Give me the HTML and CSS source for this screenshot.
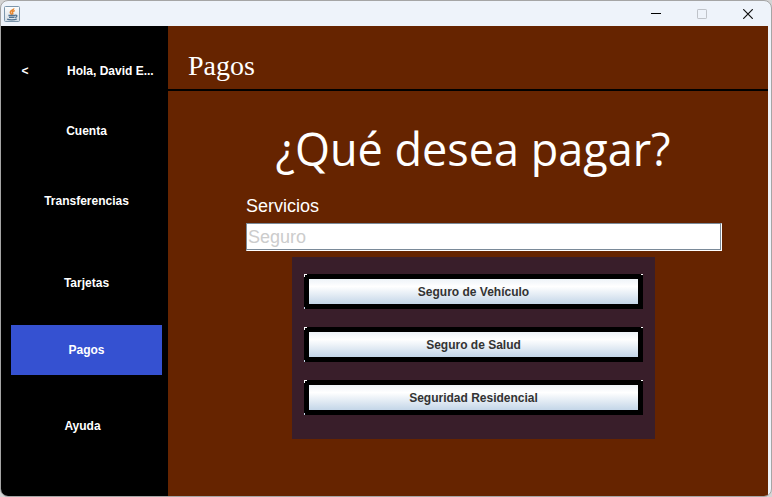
FILE: index.html
```html
<!DOCTYPE html>
<html lang="es">
<head>
<meta charset="utf-8">
<meta name="viewport" content="width=device-width, initial-scale=1">
<title>Pagos</title>
<link rel="stylesheet" href="styles.css">
</head>
<body>
<div class="window">
  <header class="titlebar">
    <svg class="app-icon" viewBox="0 0 16 16" aria-hidden="true">
      <defs>
        <linearGradient id="tile" x1="0" y1="0" x2="0" y2="1">
          <stop offset="0" stop-color="#fdfdfd"/>
          <stop offset="1" stop-color="#d3dde6"/>
        </linearGradient>
      </defs>
      <rect x="0.5" y="0.5" width="15" height="15" rx="1" fill="url(#tile)" stroke="#7c96ac"/>
      <path d="M9.8 2.3C10 4 6.2 4.5 6.3 6.3C6.3 7.2 7.2 7.8 7.7 8.8M10.8 4.6C8.8 5.3 7.9 6 8.6 7C9 7.6 8.9 8 8.4 8.6" fill="none" stroke="#e8862e" stroke-width="1.5"/>
      <path d="M4.4 9.5H11M5 11.4H10.5M11 9.3C13.7 8.8 13.3 11 11.2 11.6M3.2 13.2C5 14.1 10.5 14.2 12.8 13" fill="none" stroke="#527391" stroke-width="1.3"/>
    </svg>
    <div class="controls">
      <button class="control" type="button" aria-label="Minimizar">
        <svg viewBox="0 0 10 10" aria-hidden="true"><path d="M0 4.5H10" stroke="#000" fill="none"/></svg>
      </button>
      <button class="control" type="button" aria-label="Maximizar" disabled>
        <svg viewBox="0 0 10 10" aria-hidden="true"><rect x="0.5" y="0.5" width="9" height="9" rx="0.6" stroke="#bfc3c9" fill="none"/></svg>
      </button>
      <button class="control" type="button" aria-label="Cerrar">
        <svg viewBox="0 0 10 10" aria-hidden="true"><path d="M0.2 0.2L9.8 9.8M9.8 0.2L0.2 9.8" stroke="#111" stroke-width="1.2" fill="none"/></svg>
      </button>
    </div>
  </header>
  <div class="body">
    <nav class="sidebar">
      <div class="user">
        <button class="back" type="button">&lt;</button>
        <span class="greeting">Hola, David E...</span>
      </div>
      <button class="item account" type="button">Cuenta</button>
      <button class="item transfers" type="button">Transferencias</button>
      <button class="item cards" type="button">Tarjetas</button>
      <button class="item payments" type="button" aria-current="page">Pagos</button>
      <button class="item help" type="button">Ayuda</button>
    </nav>
    <main class="main">
      <h1 class="title">Pagos</h1>
      <h2 class="question">¿Qué desea pagar?</h2>
      <div class="field">
        <label for="service">Servicios</label>
        <input id="service" type="text" placeholder="Seguro">
      </div>
      <div class="options">
        <button class="option" type="button">Seguro de Vehículo</button>
        <button class="option" type="button">Seguro de Salud</button>
        <button class="option" type="button">Seguridad Residencial</button>
      </div>
    </main>
  </div>
</div>
</body>
</html>
```
FILE: styles.css
```css
* {
  box-sizing: border-box;
}

body {
  margin: 0;
  background: #d4d4d4;
  font-family: "Liberation Sans", Arial, sans-serif;
}

button {
  margin: 0;
  padding: 0;
  border: 0;
  background: none;
  color: inherit;
  font: bold 12px/16px "Liberation Sans", Arial, sans-serif;
}

.window {
  display: flex;
  flex-direction: column;
  min-height: 100vh;
  border: 1px solid #a5a5a5;
  border-radius: 8px;
  background: #eef3fa;
  overflow: hidden;
}

.titlebar {
  display: flex;
  align-items: center;
  justify-content: space-between;
  height: 25px;
  padding-left: 3px;
}

.app-icon {
  width: 16px;
  height: 16px;
}

.controls {
  display: flex;
}

.control {
  display: flex;
  align-items: center;
  justify-content: center;
  width: 46px;
  height: 25px;
}

.control svg {
  width: 10px;
  height: 10px;
}

.body {
  display: flex;
  flex: 1;
  margin-right: 3px;
}

.sidebar {
  display: flex;
  flex-direction: column;
  flex: 0 0 167px;
  padding: 20px 6px 20px 10px;
  background: #000;
  color: #fff;
}

.user {
  display: flex;
  align-items: center;
  height: 50px;
  font: bold 12px/16px "Liberation Sans", Arial, sans-serif;
}

.back {
  width: 28px;
}

.greeting {
  margin-left: 28px;
  white-space: nowrap;
}

.item {
  height: 50px;
}

.account {
  margin-top: 10px;
}

.transfers {
  margin-top: 20px;
}

.cards {
  margin-top: 32px;
}

.payments {
  margin-top: 17px;
  background: #3551d1;
}

.help {
  margin-top: 26px;
  padding-right: 8px;
}

.main {
  display: flex;
  flex-direction: column;
  flex: 1;
  background: #662400;
  color: #fff;
}

.title {
  margin: 0;
  padding: 24px 20px 7px;
  border-bottom: 2px solid #000;
  font: 28px/32px "Liberation Serif", "Times New Roman", serif;
}

.question {
  margin: 26px 0 0;
  padding-left: 10px;
  font: 45px/64px "Open Sans", "Segoe UI", sans-serif;
  text-align: center;
}

.field {
  display: flex;
  flex-direction: column;
  gap: 6px;
  margin: 14px 46px 0 78px;
  font-size: 18px;
  line-height: 22px;
}

.field input {
  width: 100%;
  height: 28px;
  padding: 1px 1px 0;
  border: 1px solid #fff;
  border-top-color: #7a8a99;
  border-left-color: #7a8a99;
  outline: 0;
  box-shadow: inset -1px -1px 0 #7a8a99;
  background: #fff;
  color: #333;
  font: 18px/22px "Liberation Sans", Arial, sans-serif;
}

.field input::placeholder {
  color: #ccc;
  opacity: 1;
}

.options {
  display: flex;
  flex-direction: column;
  gap: 18px;
  width: 363px;
  max-width: 100%;
  margin: 6px auto 0 124px;
  padding: 17px 12px 24px;
  background: #391e2a;
}

.option {
  height: 35px;
  border: 5px solid transparent;
  background:
    linear-gradient(#eef3f8, #fff 30%, #c4d6e8) padding-box,
    linear-gradient(#fff, #fff) left top / 3px 1px no-repeat border-box,
    linear-gradient(#fff, #fff) left top / 1px 3px no-repeat border-box,
    linear-gradient(#fff, #fff) right top / 2px 1px no-repeat border-box,
    linear-gradient(#c4d6e8, #c4d6e8) left bottom / 1px 2px no-repeat border-box,
    linear-gradient(#000, #000) border-box;
  color: #333;
}
```
